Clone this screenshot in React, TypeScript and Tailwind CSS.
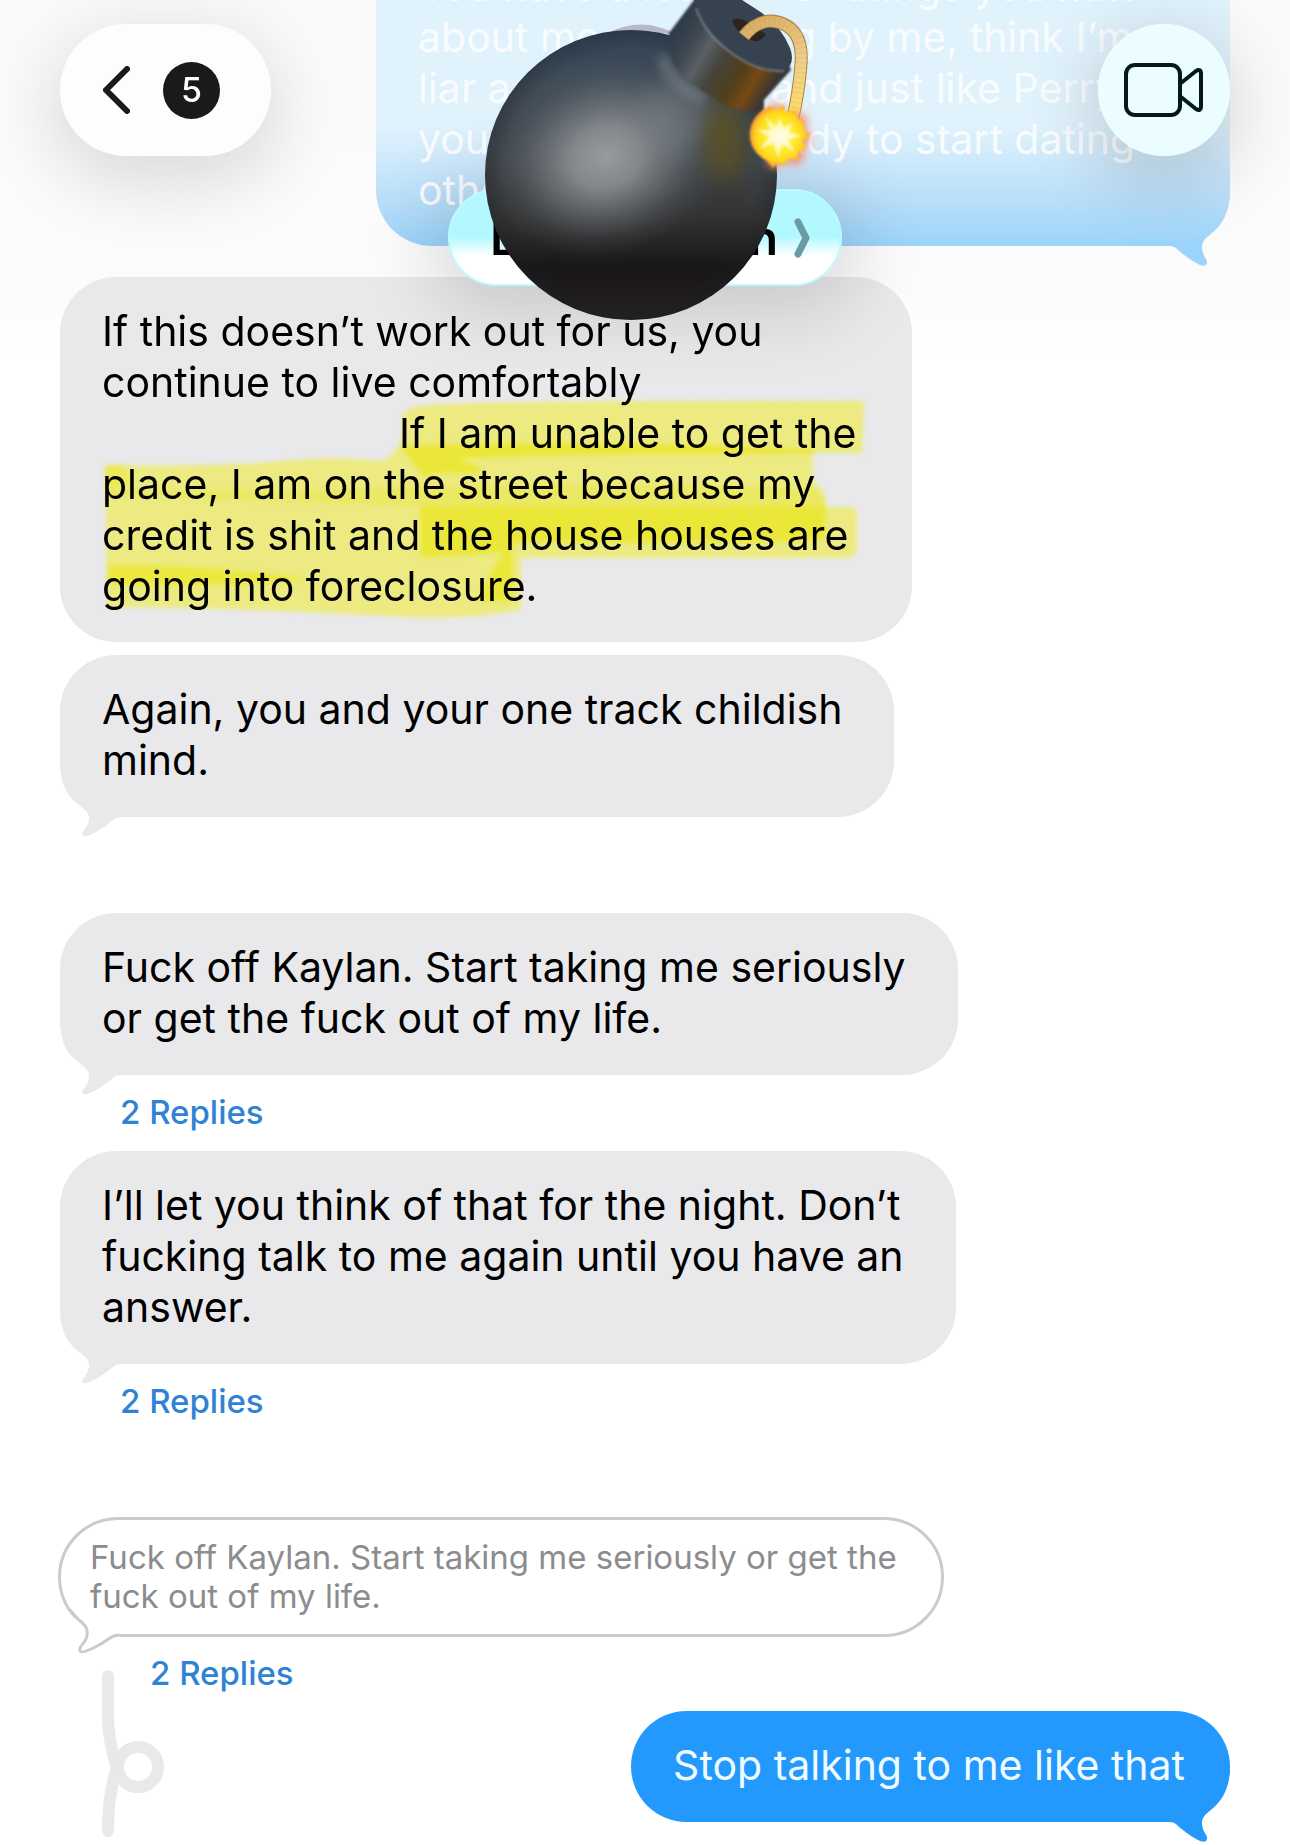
import type { ReactNode } from "react";

function Tail({ side }: { side: "in" | "out" }) {
  if (side === "out") {
    return (
      <svg aria-hidden="true" viewBox="0 0 60 72" className="absolute right-0 -bottom-5 h-[72px] w-[60px]">
        <path
          d="M60 0C59 18 53 30 42 39C33 46 30 50 33 59C34 63 38 66 37 69C36 73 32 72 28 70C20 66 10 58 6 54Q3 52 0 52L0 0Z"
          className="fill-[#2398fd]"
        />
      </svg>
    );
  }
  return (
    <svg aria-hidden="true" viewBox="0 0 60 72" className="absolute -bottom-5 left-0 h-[72px] w-[60px]">
      <path
        d="M0 0C1 18 6 30 18 39C28 46 31 50 28 59C26 64 22 67 22 69C23 73 28 71 32 69C41 65 49 58 53 55Q56 52 60 52L60 0Z"
        className="fill-[#e9e9eb]"
      />
    </svg>
  );
}

function Incoming({ children }: { children: ReactNode }) {
  return (
    <div className="relative w-fit rounded-[56px] bg-[#e9e9eb] pt-[29px] pr-[52px] pb-[31px] pl-[42px] text-[41px] leading-[51px] whitespace-nowrap">
      <Tail side="in" />
      <p className="relative">{children}</p>
    </div>
  );
}

function Replies({ className }: { className: string }) {
  return (
    <a href="#thread" className={`block w-fit text-[33px] leading-10 font-medium text-[#3083d4] ${className}`}>
      2 Replies
    </a>
  );
}

function Highlight() {
  return (
    <svg aria-hidden="true" viewBox="0 0 853 365" className="absolute top-0 left-0 h-[365px] w-[853px]">
      <defs>
        <filter id="soft" x="-5%" y="-5%" width="110%" height="110%">
          <feGaussianBlur stdDeviation="2" />
        </filter>
      </defs>
      <g filter="url(#soft)">
        <path
          d="M342 142Q342 132 360 129Q400 123 804 124L802 176H752L753 205Q766 212 766 230H790Q797 230 797 240V272Q796 281 788 281H461V333Q400 344 330 339Q150 330 47 330L45 188Q120 190 200 186Q270 178 320 184Q336 180 342 160Z"
          fill="#ecea80"
        />
        <g fill="#ebe72a" opacity="0.85">
          <path d="M342 168Q560 162 755 172V177Q560 176 400 182L420 190V197H370L366 203L342 172Z" />
          <path d="M360 229H766V262Q700 268 640 266H453V325H420Q430 290 444 276L360 281Z" />
          <path d="M47 288Q150 286 250 302Q200 310 47 308Z" opacity="0.9" />
          <path d="M47 212Q200 216 340 210Q560 204 755 212Q766 218 766 229H350Q180 222 47 219Z" opacity="0.4" />
          <path d="M45 188H63L70 206L47 214Z" opacity="0.6" />
        </g>
      </g>
    </svg>
  );
}

function Bomb() {
  return (
    <svg aria-hidden="true" viewBox="480 0 340 322" className="absolute top-0 left-1/2 ml-[-165px] h-[322px] w-[340px]">
      <defs>
        <linearGradient id="ball" x1="0" y1="0" x2="0" y2="1">
          <stop offset="0" stopColor="#31455a" />
          <stop offset="0.2" stopColor="#3f4a55" />
          <stop offset="0.45" stopColor="#41464b" />
          <stop offset="0.65" stopColor="#323232" />
          <stop offset="0.82" stopColor="#181616" />
          <stop offset="1" stopColor="#25201e" />
        </linearGradient>
        <radialGradient id="glow" gradientUnits="userSpaceOnUse" cx="0" cy="0" r="1" gradientTransform="translate(606 157) rotate(-20) scale(122 100)">
          <stop offset="0" stopColor="#989b9e" />
          <stop offset="0.3" stopColor="#8f9296" stopOpacity="0.85" />
          <stop offset="0.55" stopColor="#7f858a" stopOpacity="0.52" />
          <stop offset="0.8" stopColor="#6d757d" stopOpacity="0.16" />
          <stop offset="1" stopColor="#606a74" stopOpacity="0" />
        </radialGradient>
        <radialGradient id="rim">
          <stop offset="0.86" stopColor="#1c2228" stopOpacity="0" />
          <stop offset="1" stopColor="#1c2228" stopOpacity="0.35" />
        </radialGradient>
        <linearGradient id="neck" gradientUnits="userSpaceOnUse" x1="676" y1="35" x2="778" y2="98">
          <stop offset="0" stopColor="#2f3d4c" />
          <stop offset="0.15" stopColor="#3f4850" />
          <stop offset="0.28" stopColor="#5c6165" />
          <stop offset="0.42" stopColor="#45443f" />
          <stop offset="0.62" stopColor="#513f1c" />
          <stop offset="0.76" stopColor="#774812" />
          <stop offset="0.9" stopColor="#3d3634" />
          <stop offset="1" stopColor="#333337" />
        </linearGradient>
        <linearGradient id="fuse" gradientUnits="userSpaceOnUse" x1="745" y1="20" x2="808" y2="118">
          <stop offset="0" stopColor="#d8ab62" />
          <stop offset="0.55" stopColor="#efcd8a" />
          <stop offset="1" stopColor="#ffe45c" />
        </linearGradient>
        <radialGradient id="spark">
          <stop offset="0" stopColor="#fffef0" />
          <stop offset="0.15" stopColor="#fff9a8" />
          <stop offset="0.42" stopColor="#ffee30" />
          <stop offset="0.78" stopColor="#ffd81c" />
          <stop offset="1" stopColor="#fb9a34" />
        </radialGradient>
        <filter id="haze" x="-200%" y="-200%" width="500%" height="500%">
          <feGaussianBlur stdDeviation="12" />
        </filter>
        <filter id="sheen" x="-50%" y="-50%" width="200%" height="200%">
          <feGaussianBlur stdDeviation="5" />
        </filter>
        <filter id="edge" x="-20%" y="-20%" width="140%" height="140%">
          <feGaussianBlur stdDeviation="1" />
        </filter>
        <clipPath id="ballClip">
          <ellipse cx="631" cy="175" rx="146" ry="145" />
        </clipPath>
      </defs>
      <path d="M610 32Q642 16 676 34Z" fill="#b9b8c6" />
      <ellipse cx="631" cy="175" rx="146" ry="145" fill="url(#ball)" />
      <g clipPath="url(#ballClip)">
        <ellipse cx="612" cy="155" rx="130" ry="120" fill="url(#glow)" />
        <ellipse cx="676" cy="116" rx="34" ry="36" fill="#858b91" opacity="0.4" filter="url(#haze)" />
        <ellipse cx="724" cy="140" rx="14" ry="40" fill="#66550f" opacity="0.85" filter="url(#haze)" />
        <path d="M662 56Q668 82 704 100" fill="none" stroke="#858a8f" strokeWidth="12" opacity="0.5" filter="url(#sheen)" />
        <ellipse cx="631" cy="175" rx="146" ry="145" fill="url(#rim)" />
      </g>
      <path d="M694 0L669 33Q664 54 684 76Q716 104 742 110L764 112L764 100L791 70L780 40L740 0Z" fill="url(#neck)" filter="url(#edge)" />
      <path d="M694 0Q700 28 728 49Q758 74 784 71Q796 64 790 48Q780 24 756 9L742 0Z" fill="#36424f" />
      <path d="M696 8Q704 32 730 52Q758 73 784 71" fill="none" stroke="#8b9095" strokeWidth="2" opacity="0.7" filter="url(#edge)" />
      <path d="M732 20Q740 16 750 24L766 34Q758 46 748 38Q734 30 732 20Z" fill="#2b2421" />
      <g fill="none">
        <path d="M744 36Q756 21 772 21Q804 25 801 64Q799 92 792 122" stroke="#a87f45" strokeWidth="13" />
        <path d="M744 36Q756 21 772 21Q804 25 801 64Q799 92 792 122" stroke="url(#fuse)" strokeWidth="11" />
        <path d="M744 36Q756 21 772 21Q804 25 801 64Q799 92 792 122" stroke="#a97c3c" strokeWidth="11" strokeDasharray="1 4" opacity="0.15" />
      </g>
      <g filter="url(#sheen)" fill="#f78d6c">
        <circle cx="776" cy="112" r="8" />
        <circle cx="798" cy="122" r="9" />
        <circle cx="801" cy="138" r="9" />
        <circle cx="794" cy="155" r="10" />
        <circle cx="775" cy="160" r="8" />
      </g>
      <path
        d="M770 106L777 110L783 105L786 112L795 111L797 119L804 121L803 129L810 135L802 141L806 149L798 151L798 160L789 158L784 165L778 163L773 168L767 161Q756 155 752 146Q748 136 751 126Q755 115 763 110Z"
        fill="url(#spark)"
        filter="url(#edge)"
      />
      <path
        d="M780 118L783 128L793 123L789 132L802 136L788 140L795 152L782 144L778 158L774 143L760 149L769 137L757 130L771 130L765 117L776 127Z"
        fill="#fffdf0"
        opacity="0.7"
        filter="url(#edge)"
      />
    </svg>
  );
}

function Header() {
  return (
    <header className="pointer-events-none absolute inset-x-0 top-0 z-10 h-[360px]">
      <div className="flex items-start justify-between px-[60px] pt-6">
        <button
          type="button"
          aria-label="Back, 5 unread conversations"
          className="flex h-[132px] w-[211px] items-center gap-[33px] rounded-[66px] bg-[#fdfdfe] pl-[43px] shadow-[0_20px_70px_10px_rgba(0,0,0,0.13)]"
        >
          <svg aria-hidden="true" viewBox="0 0 27 48" className="h-12 w-[27px]">
            <path d="M24 3L3 24L24 45" fill="none" stroke="#1a1a1c" strokeWidth="6" strokeLinecap="round" strokeLinejoin="round" />
          </svg>
          <span className="flex size-[57px] items-center justify-center rounded-full bg-[#1a1a1c] text-[34px] leading-none font-medium text-white">
            5
          </span>
        </button>
        <button
          type="button"
          aria-label="Video call"
          className="flex size-[132px] items-center justify-center rounded-full bg-[#ecfeff]/90 shadow-[0_20px_70px_10px_rgba(0,0,0,0.15)]"
        >
          <svg aria-hidden="true" viewBox="0 0 80 54" fill="none" stroke="#04181f" strokeWidth="4" strokeLinejoin="round" className="h-[54px] w-20">
            <rect x="2" y="2" width="54" height="50" rx="9" />
            <path d="M57 20L72 8Q77 5 77 11V43Q77 49 72 46L57 34" />
          </svg>
        </button>
      </div>
      <button
        type="button"
        aria-label="Contact details"
        className="absolute top-[189px] left-1/2 ml-[-197px] flex h-[97px] w-[394px] items-center justify-between rounded-full border-2 border-[#b9fbff] bg-linear-to-b from-[#b4f8ff] from-50% to-white to-70% pr-[30px] pl-10 shadow-[0_10px_70px_20px_rgba(0,0,0,0.13)]"
      >
        <span className="text-[48px] leading-none font-semibold">L</span>
        <span className="flex items-center gap-4 text-[48px] leading-none font-semibold">
          n
          <svg aria-hidden="true" viewBox="0 0 16 40" className="h-10 w-4">
            <path d="M4 4L12 20L4 36" fill="none" stroke="#6a9ba3" strokeWidth="7" strokeLinecap="round" strokeLinejoin="round" />
          </svg>
        </span>
      </button>
      <Bomb />
    </header>
  );
}

export default function App() {
  return (
    <div className="relative min-h-screen overflow-hidden bg-[linear-gradient(#fafafa,#fcfcfc_300px,#ffffff_360px)] font-['Inter',sans-serif] text-black">
      <Header />
      <main className="flex flex-col px-[60px]">
        <div className="relative -mt-[39px] ml-auto w-full max-w-[854px] rounded-b-[56px] bg-linear-to-b from-[#e0f2fc] from-58% via-[#bce0fa] via-82% to-[#9bd4fb] pb-[30px] pl-[42px] text-[41px] leading-[51px] whitespace-nowrap text-[#f8fcff]">
          <svg aria-hidden="true" viewBox="0 0 60 72" className="absolute right-0 -bottom-5 h-[72px] w-[60px]">
            <defs>
              <linearGradient id="tailShade" gradientUnits="userSpaceOnUse" x1="0" y1="0" x2="0" y2="52">
                <stop offset="0" stopColor="#bce0fa" />
                <stop offset="1" stopColor="#9bd4fb" />
              </linearGradient>
            </defs>
            <path
              d="M60 0C59 18 53 30 42 39C33 46 30 50 33 59C34 63 38 66 37 69C36 73 32 72 28 70C20 66 10 58 6 54Q3 52 0 52L0 0Z"
              fill="url(#tailShade)"
            />
          </svg>
          <p className="relative">
            <span className="flex justify-between pr-[89px]">
              <span>You have a lot</span>
              <span>of things you hate</span>
            </span>
            <span className="flex">
              <span className="w-[373px]">about me</span>g by me, think I’m a
            </span>
            <span className="flex">
              <span className="w-[353px]">liar a</span>and just like Perry u
            </span>
            <span className="flex">
              <span className="w-[365px]">you</span>ady to start dating
            </span>
            <span className="block">othe</span>
          </p>
        </div>

        <div className="relative mt-[31px] w-fit rounded-[56px] bg-[#e9e9eb] pt-[29px] pr-[56px] pb-[30px] pl-[42px] text-[41px] leading-[51px] whitespace-nowrap">
          <Highlight />
          <p className="relative">
            <span className="block">If this doesn’t work out for us, you</span>
            <span className="block">continue to live comfortably</span>
            <span className="block pl-[297px]">If I am unable to get the</span>
            <span className="block">place, I am on the street because my</span>
            <span className="block">credit is shit and the house houses are</span>
            <span className="block">going into foreclosure.</span>
          </p>
        </div>

        <div className="mt-[13px]">
          <Incoming>
            Again, you and your one track childish
            <br />
            mind.
          </Incoming>
        </div>

        <div className="mt-24">
          <Incoming>
            Fuck off Kaylan. Start taking me seriously
            <br />
            or get the fuck out of my life.
          </Incoming>
          <Replies className="mt-[17px] ml-[60px]" />
        </div>

        <div className="mt-[19px]">
          <Incoming>
            I’ll let you think of that for the night. Don’t
            <br />
            fucking talk to me again until you have an
            <br />
            answer.
          </Incoming>
          <Replies className="mt-[17px] ml-[60px]" />
        </div>

        <div className="relative mt-24 -ml-0.5 w-fit rounded-[60px] border-3 border-[#cbcbcd] bg-white py-[18px] pr-11 pl-[29px] text-[33px] leading-[39px] whitespace-nowrap text-[#8c8c8e]">
          <svg aria-hidden="true" viewBox="0 0 62 64" className="absolute -bottom-[21px] -left-[3px] h-16 w-[62px]">
            <path d="M18 22L62 38V47H48Q30 44 16 30Z" fill="white" />
            <path
              d="M12 19C15 23 18 26 21 29C29 35 31 40 28 48C26 53 20 56 22 60C24 64 44 53 52 47Q56 44 62 44"
              fill="white"
              stroke="#cbcbcd"
              strokeWidth="3"
            />
          </svg>
          <p className="relative">
            Fuck off Kaylan. Start taking me seriously or get the
            <br />
            fuck out of my life.
          </p>
        </div>

        <div className="flex items-start justify-between">
          <div className="flex items-start pl-10">
            <svg id="thread" aria-hidden="true" viewBox="0 0 64 170" className="mt-8 h-[170px] w-16">
              <g fill="none" stroke="#e9e9e9" strokeWidth="12" strokeLinecap="round">
                <path d="M8 7V50Q9 75 17 99Q8 125 8 162" />
                <circle cx="38" cy="98" r="20" />
              </g>
            </svg>
            <Replies className="mt-4 -ml-[14px]" />
          </div>
          <div className="relative mt-[74px] w-fit rounded-[56px] bg-[#2398fd] pt-[29px] pr-[45px] pb-[31px] pl-[42px] text-[41px] leading-[51px] whitespace-nowrap text-[#effcff]">
            <Tail side="out" />
            <p className="relative">Stop talking to me like that</p>
          </div>
        </div>
      </main>
    </div>
  );
}
